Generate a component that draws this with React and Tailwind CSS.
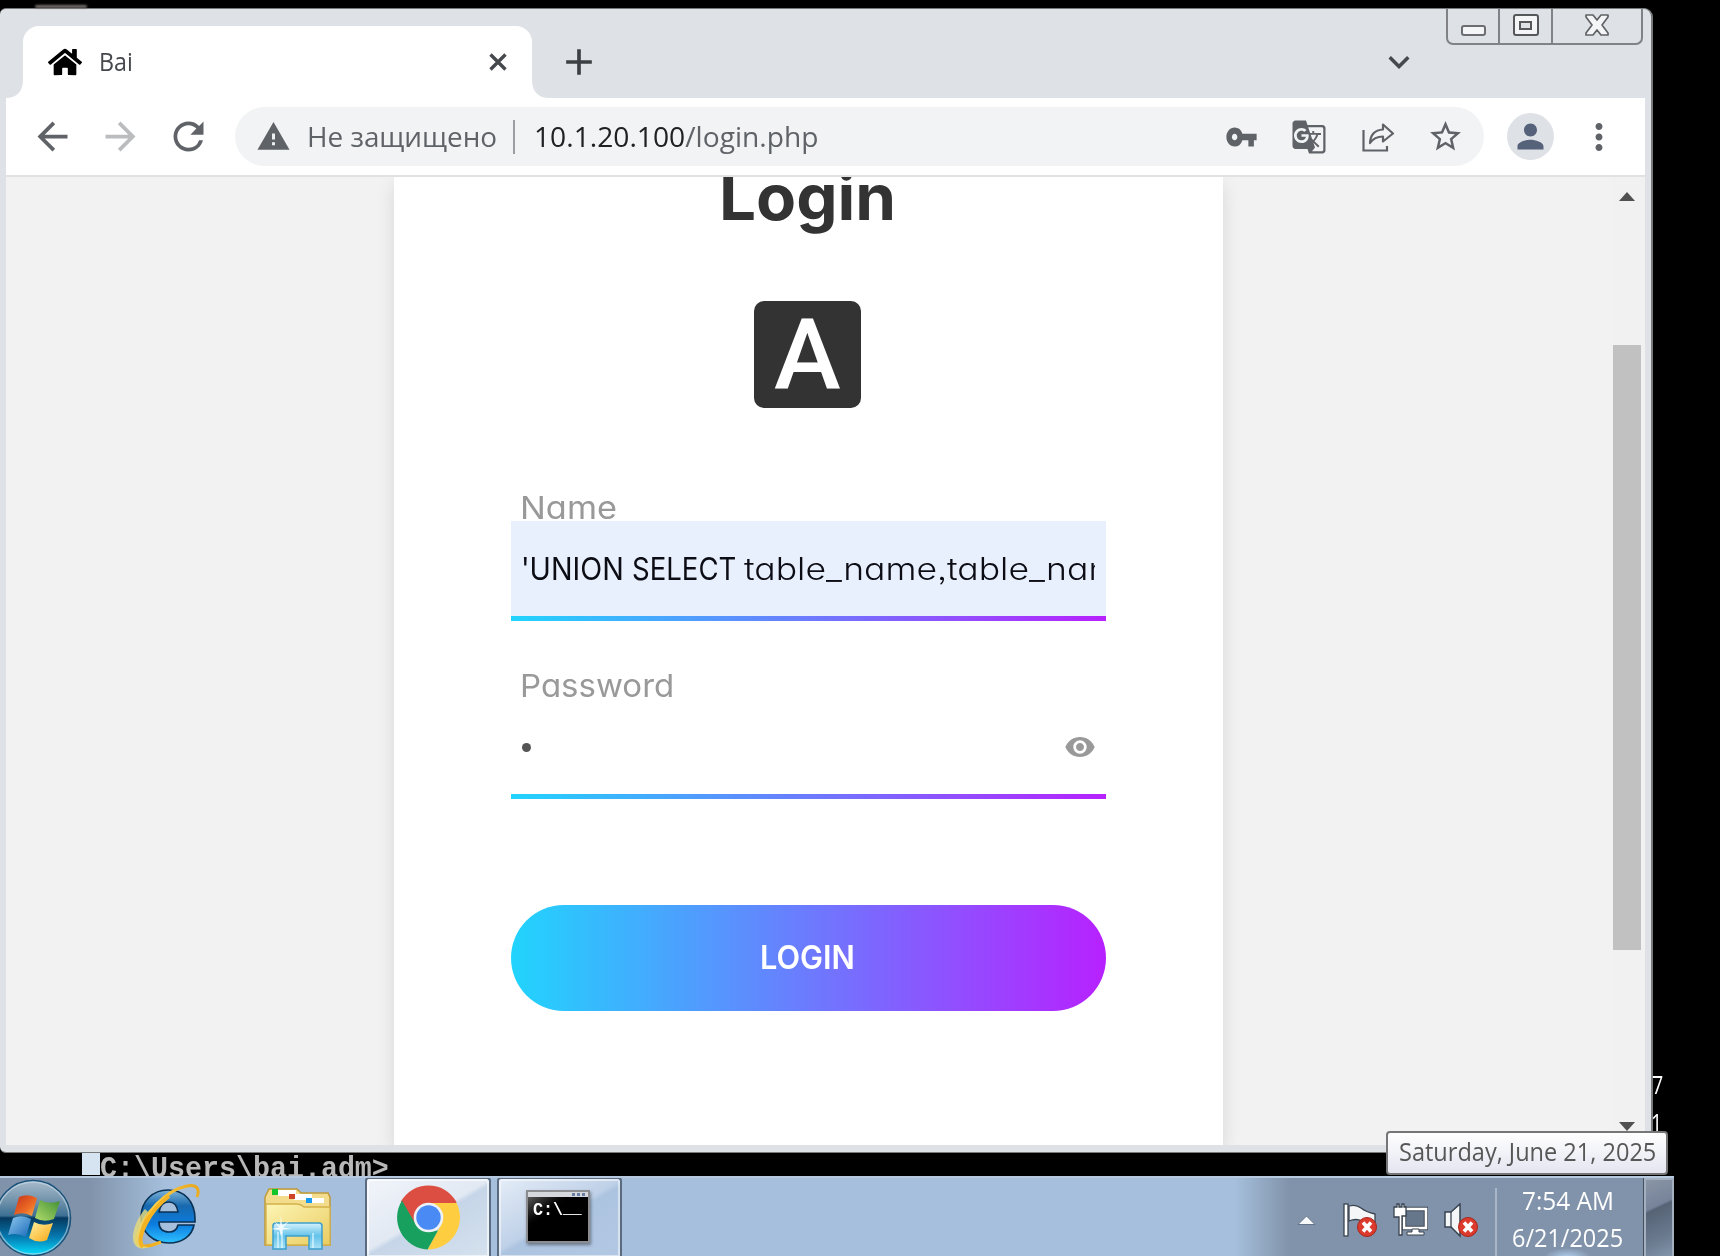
import React, { useLayoutEffect, useRef, useState } from "react";
import {
  MdArrowBack, MdArrowForward, MdRefresh, MdVpnKey, MdGTranslate, MdStarBorder, MdPerson,
  MdMoreVert, MdVisibility, MdAdd, MdKeyboardArrowDown, MdWarning,
} from "react-icons/md";
import { FaHome } from "react-icons/fa";

// Text set to an exact advance width, condensed or widened horizontally.
function Fit({ w, className = "", children }) {
  const ref = useRef(null);
  const [k, setK] = useState(1);
  useLayoutEffect(() => {
    setK(w / ref.current.offsetWidth);
  }, [w]);
  return (
    <span className={"block shrink-0 whitespace-nowrap " + className} style={{ width: w }}>
      <span ref={ref} className="inline-block origin-left whitespace-pre" style={{ transform: `scaleX(${k})` }}>
        {children}
      </span>
    </span>
  );
}

const SEGOE = "font-['Open_Sans',sans-serif]";
const GEO = "font-[Inter,sans-serif] [font-feature-settings:'cv11','ss03']";

function CaptionButtons() {
  return (
    <div className="flex h-[36px] w-[197px] rounded-b-[7px] border-2 border-t-0 border-[#808286]">
      <div className="flex w-[52px] items-end justify-center border-r-2 border-[#808286] pb-[7px]">
        <div className="h-[11px] w-[25px] rounded-[3px] border-2 border-[#6b6d70] bg-[#f4f5f6]" />
      </div>
      <div className="flex w-[53px] items-end justify-center border-r-2 border-[#808286] pb-[7px]">
        <div className="flex h-[22px] w-[26px] items-center justify-center rounded-[3px] border-2 border-[#55575a] bg-[#f4f5f6]">
          <div className="h-[9px] w-[13px] border-2 border-[#55575a] bg-[#dee1e6]" />
        </div>
      </div>
      <div className="flex flex-1 items-end justify-center pb-[6px]">
        <svg width="26" height="24" viewBox="0 0 26 24">
          <path d="M2 2h7l4 5 4-5h7v2l-6 8 6 8v2h-7l-4-5-4 5H2v-2l6-8-6-8z" fill="#f4f5f6" stroke="#606265" strokeWidth="1.7" strokeLinejoin="round" />
        </svg>
      </div>
    </div>
  );
}

function TabStrip() {
  return (
    <div className="flex h-[89px] items-end">
      <svg width="17" height="18" viewBox="0 0 17 18" className="shrink-0">
        <path d="M0 18C10 18 17 12 17 0V18z" fill="#fff" />
      </svg>
      <div className="flex h-[72px] w-[509px] shrink-0 items-center rounded-t-[16px] bg-white">
        <FaHome className="ml-[25px] h-[30px] w-[34px] text-black" preserveAspectRatio="none" />
        <Fit w={34} className={`ml-[17px] pb-[2px] text-[26px] leading-[40px] text-[#45484d] ${SEGOE}`}>Bai</Fit>
        <svg width="20" height="20" viewBox="0 0 20 20" className="ml-[355px] shrink-0">
          <path d="M2.500 2.500L17.500 17.500M17.500 2.500L2.500 17.500" stroke="#45484d" strokeWidth="3.400" />
        </svg>
      </div>
      <svg width="17" height="18" viewBox="0 0 17 18" className="shrink-0">
        <path d="M17 18C7 18 0 12 0 0V18z" fill="#fff" />
      </svg>
      <MdAdd className="mb-[14px] ml-[8px] h-[44px] w-[44px] text-[#3c4043]" />
      <MdKeyboardArrowDown className="mb-[15px] ml-[777px] h-[42px] w-[42px] text-[#45484d]" />
      <div className="ml-[26px] self-start">
        <CaptionButtons />
      </div>
    </div>
  );
}

function ShareIcon() {
  return (
    <svg width="34" height="32" viewBox="0 0 34 32" fill="none" stroke="#5f6368" strokeWidth="2.2" className="shrink-0">
      <path d="M2.5 9V29.5H26V25" />
      <path d="M9 22C9.500 13 14 9 22 8.500V3.500L32 12.500 22 20.500V15.500C16 15.500 12 17.500 9 22z" strokeLinejoin="round" />
    </svg>
  );
}

function Toolbar() {
  return (
    <div className="flex h-[77px] items-center bg-white text-[#5f6368]">
      <MdArrowBack className="ml-[24px] h-[45px] w-[45px] shrink-0" />
      <MdArrowForward className="ml-[23px] h-[45px] w-[45px] shrink-0 text-[#babcbe]" />
      <MdRefresh className="ml-[23px] h-[45px] w-[45px] shrink-0" />
      <div className="ml-[24px] flex h-[59px] w-[1249px] shrink-0 items-center rounded-full bg-[#f1f3f4]">
        <MdWarning className="ml-[21px] h-[35px] w-[35px] shrink-0" />
        <Fit w={190} className={`ml-[16px] pb-px text-[28px] leading-[40px] ${SEGOE}`}>Не защищено</Fit>
        <div className="ml-[16px] h-[34px] w-[2px] shrink-0 bg-[#9b9ea2]" />
        <Fit w={285} className={`ml-[19px] pb-px text-[28px] leading-[40px] ${SEGOE}`}>
          <span className="text-[#202124]">10.1.20.100</span>/login.php
        </Fit>
        <MdVpnKey className="ml-[406px] h-[38px] w-[33px] shrink-0" preserveAspectRatio="none" />
        <MdGTranslate className="ml-[33px] h-[36px] w-[36px] shrink-0" />
        <div className="ml-[34px] flex shrink-0"><ShareIcon /></div>
        <MdStarBorder className="ml-[32px] h-[37px] w-[37px] shrink-0" />
      </div>
      <div className="ml-[23px] flex h-[47px] w-[47px] shrink-0 items-center justify-center rounded-full bg-[#dee1e6]">
        <MdPerson className="h-[39px] w-[39px] text-[#56617a]" />
      </div>
      <MdMoreVert className="ml-[24px] h-[42px] w-[42px] shrink-0" />
    </div>
  );
}

function LoginCard() {
  return (
    <div className="ml-[388px] flex w-[829px] shrink-0 flex-col items-center bg-white shadow-[0_8px_18px_rgba(0,0,0,0.11)]">
      <Fit w={177} className={`-mt-[14px] mr-[3px] h-[69px] text-[64px] leading-[68px] font-bold text-[#333] ${GEO}`}>Login</Fit>
      <div className="mt-[69px] mr-[2px] flex h-[107px] w-[107px] items-center justify-center rounded-[10px] bg-[#333] text-white">
        <Fit w={67} className="h-[107px] font-[Roboto,sans-serif] text-[99px] leading-[107px] font-medium">A</Fit>
      </div>
      <div className="mt-[76px] w-[595px]">
        <Fit w={97} className={`ml-[9px] h-[37px] text-[31.500px] leading-[47px] text-[#999] ${GEO}`}>Name</Fit>
        <div className="h-[95px] overflow-hidden bg-[#e8f0fe] pt-[24px] pl-[10px]">
          <div className={`flex w-[574px] overflow-hidden text-[31px] leading-[48px] text-[#0c0c14] ${GEO}`}>
            <Fit w={111}>{"'UNION "}</Fit>
            <Fit w={112}>{"SELECT "}</Fit>
            <Fit w={203} className="font-light">table_name,</Fit>
            <Fit w={172} className="font-light">table_nam</Fit>
          </div>
        </div>
        <div className="h-[5px] bg-[linear-gradient(90deg,#21d4fd,#b721ff)]" />
        <Fit w={154} className={`mt-[45px] ml-[9px] h-[40px] text-[31.500px] leading-[40px] text-[#999] ${GEO}`}>Password</Fit>
        <div className="flex h-[88px] items-center pr-[10px] pl-[11px]">
          <div className="mt-[-5px] h-[9px] w-[9px] rounded-full bg-[#555]" />
          <MdVisibility className="mt-[-6px] ml-auto h-[32px] w-[32px] text-[#999]" />
        </div>
        <div className="h-[5px] bg-[linear-gradient(90deg,#21d4fd,#b721ff)]" />
        <button className="mt-[106px] flex h-[106px] w-full items-center justify-center rounded-full bg-[linear-gradient(90deg,#21d4fd,#b721ff)] text-white">
          <Fit w={95} className={`mr-[2px] text-[32px] leading-[40px] font-semibold ${GEO}`}>LOGIN</Fit>
        </button>
      </div>
    </div>
  );
}

function BrowserWindow() {
  return (
    <div className="h-[1145px] w-[1653px] shrink-0 overflow-hidden rounded-[9px] rounded-l-[6px] border-t border-r-2 border-b border-[#77797b] bg-[#dee1e6] pr-[6px] pl-[6px]">
      <TabStrip />
      <Toolbar />
      <div className="h-[2px] bg-[#e0e1e2]" />
      <div className="flex h-[968px] overflow-hidden bg-[#f2f2f2]">
        <LoginCard />
        <div className="ml-auto flex w-[33px] flex-col items-center bg-[#f1f1f1] pt-[15px] pr-[3px]">
          <svg width="16" height="9" viewBox="0 0 16 9" className="shrink-0"><path d="M8 0L16 9H0z" fill="#505050" /></svg>
          <div className="mt-[144px] h-[605px] w-[28px] shrink-0 bg-[#c1c1c1]" />
          <svg width="16" height="9" viewBox="0 0 16 9" className="mt-[172px] shrink-0"><path d="M8 9L16 0H0z" fill="#505050" /></svg>
        </div>
      </div>
    </div>
  );
}

function StartOrb() {
  return (
    <svg width="72" height="79" viewBox="0 0 72 79" className="shrink-0">
      <defs>
        <linearGradient id="orb" x1="0" y1="0" x2="0" y2="1">
          <stop offset="0" stopColor="#a9bccb" /><stop offset=".28" stopColor="#6f91ab" /><stop offset=".47" stopColor="#3c6f93" />
          <stop offset=".5" stopColor="#05395f" /><stop offset=".75" stopColor="#0679b0" /><stop offset="1" stopColor="#04e0ff" />
        </linearGradient>
        <linearGradient id="wr" x1="0" y1="0" x2="1" y2="1"><stop offset="0" stopColor="#c5321a" /><stop offset=".6" stopColor="#ec6a25" /><stop offset="1" stopColor="#f7b04c" /></linearGradient>
        <linearGradient id="wg" x1="1" y1="0" x2="0" y2="1"><stop offset="0" stopColor="#3f8f35" /><stop offset="1" stopColor="#b3dc6c" /></linearGradient>
        <linearGradient id="wb" x1="0" y1="0" x2="1" y2="1"><stop offset="0" stopColor="#8fc8ef" /><stop offset="1" stopColor="#1769b8" /></linearGradient>
        <linearGradient id="wy" x1="0" y1="0" x2="1" y2="1"><stop offset="0" stopColor="#fff0a0" /><stop offset="1" stopColor="#f6a712" /></linearGradient>
      </defs>
      <circle cx="33" cy="40" r="37.500" fill="url(#orb)" stroke="#1b5279" strokeWidth="1.600" />
      <circle cx="33" cy="40" r="36" fill="none" stroke="#c6dbe8" strokeOpacity=".6" strokeWidth="1.500" />
      <path d="M19 19Q28 15 37 20L32 38Q23 33 14 37z" fill="url(#wr)" />
      <path d="M40 22Q49 27 60 23L54 41Q44 45 35 40z" fill="url(#wg)" />
      <path d="M13 40Q22 36 31 41L26 59Q17 54 8 57z" fill="url(#wb)" />
      <path d="M34 44Q43 49 53 45L47 62Q38 66 29 60z" fill="url(#wy)" />
    </svg>
  );
}

function IeIcon() {
  return (
    <svg width="72" height="68" viewBox="0 0 72 68" className="shrink-0">
      <defs>
        <linearGradient id="ie" x1="0" y1="0" x2="0" y2="1">
          <stop offset="0" stopColor="#7fb4d8" /><stop offset=".3" stopColor="#1769ae" /><stop offset=".65" stopColor="#0b7de0" /><stop offset="1" stopColor="#2fc1ff" />
        </linearGradient>
        <linearGradient id="ring" x1="1" y1="0" x2="0" y2="1"><stop offset="0" stopColor="#e8a71c" /><stop offset=".5" stopColor="#ffd24a" /><stop offset="1" stopColor="#eda40e" /></linearGradient>
      </defs>
      <path fillRule="evenodd" d="M37 7C53 7 64 18 64 36V39H28C28 46 32 49 38 49 43 49 46 46 47 42H63C61 53 51 60 38 60 22 60 10 49 10 34 10 18 22 7 37 7zM28 29H47C46 22 43 19 38 19 32 19 29 23 28 29z" fill="url(#ie)" stroke="#0a3154" strokeWidth="1.600" />
      <path d="M66 14C69 6 66 1 56 3 35 7 12 31 6 54 4 62 10 67 30 59" fill="none" stroke="url(#ring)" strokeWidth="3" />
      <path d="M14 26C4 38-2 56 5 63 9 67 14 65 20 64 6 66 6 48 17 29z" fill="#e8dc7a" fillOpacity=".8" />
      <path d="M12 64C4 56 18 28 38 13" fill="none" stroke="#f6b321" strokeWidth="4" />
    </svg>
  );
}

function FolderIcon() {
  return (
    <svg width="70" height="64" viewBox="0 0 70 64" className="shrink-0">
      <defs>
        <linearGradient id="fo" x1="0" y1="0" x2="1" y2="1"><stop offset="0" stopColor="#fdf5b4" /><stop offset="1" stopColor="#e9cc62" /></linearGradient>
        <linearGradient id="st" x1="0" y1="0" x2="0" y2="1"><stop offset="0" stopColor="#d4f2fb" /><stop offset=".5" stopColor="#63c2ea" /><stop offset="1" stopColor="#a9e2f6" /></linearGradient>
      </defs>
      <path d="M2 10L6 2H34L38 6H65L67 10V58H2z" fill="#f3dc8c" stroke="#bf9a3c" strokeWidth="1.500" />
      <rect x="15" y="3" width="18" height="6" fill="#fff" /><rect x="9" y="2" width="6" height="6" fill="#14c62a" />
      <rect x="31" y="7" width="18" height="6" fill="#fff" /><rect x="26" y="7" width="6" height="5" fill="#cf4327" />
      <rect x="49" y="11" width="12" height="5" fill="#fff" /><rect x="43" y="11" width="6" height="5" fill="#159af0" />
      <path d="M3 17H34Q38 17 41 20H67V58H3z" fill="url(#fo)" stroke="#d3b14a" strokeWidth="1.300" />
      <path d="M10 62V39Q10 36 13 36H56Q59 36 59 39V62H46V49H23V62z" fill="url(#st)" stroke="#3c9fcb" strokeWidth="1.500" />
      <path d="M15 45V61M19 45V61M50 46V61" stroke="#e6faff" strokeWidth="1.200" />
      <path d="M18 28L19 39 27 33 20 40.500 29 42 20 42.500 18 50 16.500 43 8 42 16 40.500 11 34 17 39z" fill="#fff" fillOpacity=".85" />
    </svg>
  );
}

function ChromeIcon() {
  return (
    <svg width="65" height="65" viewBox="-32.5 -32.5 65 65">
      <path d="M-27.700 -16A32 32 0 0 1 27.700 -16L28 -14.500H0L-12.600 7.200z" fill="#dc4e41" />
      <path d="M28 -14.500A32 32 0 0 1 -1 32L12.500 7.200 0 -14.500z" fill="#ffcd40" />
      <path d="M-1 32A32 32 0 0 1 -26.500 -17L-12.600 7.200 0 14.500 9.500 13z" fill="#17a05e" />
      <circle r="14.800" fill="#eef2f7" />
      <circle r="12.200" fill="#4a8af4" />
    </svg>
  );
}

function CmdIcon() {
  return (
    <div className="h-[53px] w-[64px] border-2 border-[#8b8d90] bg-black shadow-[1px_2px_3px_rgba(0,0,0,0.4)]">
      <div className="flex h-[5px] items-center justify-end gap-[2px] bg-[#d5d9dd] pr-[3px]">
        <span className="h-[3px] w-[3px] bg-[#6a7fa6]" />
        <span className="h-[3px] w-[3px] bg-[#6a7fa6]" />
        <span className="h-[3px] w-[3px] bg-[#6a7fa6]" />
      </div>
      <div className="flex h-[44px] bg-linear-to-br from-[#5a5a5a] via-black via-40% to-black pt-[3px] pl-[5px] font-['Liberation_Mono',monospace] text-[19px] leading-[20px] text-white">
        <Fit w={30} className="h-[20px] font-bold">C:\</Fit>
        <Fit w={18} className="h-[20px] -mt-[2px] font-bold">_</Fit>
      </div>
    </div>
  );
}

function ErrorBadge({ x }) {
  return (
    <g transform={`translate(${x} 24)`}>
      <circle r="9.500" fill="#dc3a2c" stroke="#a8261c" strokeWidth="1" />
      <path d="M-4-4.500L4 4.500M4-4.500L-4 4.500" stroke="#fff" strokeWidth="3.600" />
    </g>
  );
}

function Tray() {
  return (
    <>
      <svg width="19" height="12" viewBox="0 0 19 12" className="mt-[8px] shrink-0">
        <path d="M9.500 1L18 9.500H1z" fill="#f7f9fb" stroke="#66748a" strokeWidth="1" />
      </svg>
      <svg width="36" height="36" viewBox="0 0 36 36" className="mt-[7px] ml-[26px] shrink-0">
        <rect x="2" y="1" width="4" height="32" fill="#fff" stroke="#39434f" strokeWidth="1.300" />
        <path d="M7 3Q14 1 19 5T33 11V19Q26 21 20 18T7 18z" fill="#f5f6f8" stroke="#39434f" strokeWidth="1.300" />
        <ErrorBadge x={25} />
      </svg>
      <svg width="36" height="36" viewBox="0 0 36 36" className="mt-[7px] ml-[14px] shrink-0">
        <rect x="12" y="6" width="22" height="19" fill="#67778b" stroke="#39434f" strokeWidth="4.500" />
        <rect x="12" y="6" width="22" height="19" fill="none" stroke="#fff" strokeWidth="2.600" />
        <path d="M20 26H27V29H32V32H15V29H20z" fill="#fff" stroke="#39434f" strokeWidth="1" />
        <path d="M2 4H5V1H7V4H10V1H12V4H14V13H10V32H7V14H2z" fill="#fff" stroke="#39434f" strokeWidth="1.300" />
      </svg>
      <svg width="36" height="36" viewBox="0 0 36 36" className="mt-[7px] ml-[16px] shrink-0">
        <path d="M1 9H7L16 1V33L7 24H1z" fill="#f5f6f8" stroke="#39434f" strokeWidth="1.500" />
        <path d="M7 9V24" stroke="#39434f" strokeWidth="1.300" />
        <ErrorBadge x={24} />
      </svg>
    </>
  );
}

function Taskbar() {
  return (
    <div className="flex h-[80px] w-[1674px] shrink-0 items-center overflow-hidden border-t-2 border-[#b6c9df] bg-[linear-gradient(90deg,#8193aa_0px,#8193aa_90px,#a5bfdc_165px,#a5bfdc_1235px,#8193aa_1290px)]">
      <StartOrb />
      <div className="ml-[59px] flex shrink-0"><IeIcon /></div>
      <div className="mt-[4px] ml-[60px] flex shrink-0"><FolderIcon /></div>
      <div className="ml-[32px] flex h-[80px] w-[126px] shrink-0 items-center justify-center rounded-t-[4px] border-2 border-b-0 border-[#5a6b80] bg-[linear-gradient(150deg,#f1f4fa_0%,#e2e9f3_48%,#c6d6e8_52%,#d5e1ee_100%)] pb-px shadow-[inset_0_0_0_2px_#ffffff99]">
        <ChromeIcon />
      </div>
      <div className="ml-[6px] flex h-[80px] w-[125px] shrink-0 items-center justify-center rounded-t-[4px] border-2 border-b-0 border-[#5a6b80] bg-[linear-gradient(150deg,#e4ecf7_0%,#bfd1e8_48%,#adc4e0_52%,#b2c7e2_100%)] pr-[3px] pb-[3px] shadow-[inset_0_0_0_2px_#ffffff80]">
        <CmdIcon />
      </div>
      <div className="ml-[675px] flex shrink-0 items-center"><Tray /></div>
      <div className="ml-[15px] h-[68px] w-[2px] shrink-0 self-end bg-[#a9b7c8]" />
      <div className="flex w-[141px] shrink-0 flex-col items-center self-start bg-[radial-gradient(ellipse_24px_10px_at_50%_80px,#b5d3f2,transparent)] pt-[4px] text-[26px] text-white">
        <Fit w={92} className={`h-[37px] leading-[37px] ${SEGOE}`}>7:54 AM</Fit>
        <Fit w={111} className={`h-[38px] leading-[37px] ${SEGOE}`}>6/21/2025</Fit>
      </div>
      <div className="ml-auto h-full w-[30px] shrink-0 border-2 border-b-0 border-[#a4b0bf] bg-[linear-gradient(155deg,#8a96a5_0%,#76839a_35%,#566375_38%,#6b7b90_75%,#8295ac_100%)] shadow-[-1px_0_0_#45505f]" />
    </div>
  );
}

export default function App() {
  return (
    <div className="relative flex h-[1256px] w-[1720px] flex-col overflow-hidden bg-black pt-[8px]">
      <div className="absolute top-[5px] left-[35px] h-[3px] w-[52px] rounded-full bg-[#77716e] blur-[1px]" />
      <BrowserWindow />
      <div className="flex h-[23px] overflow-hidden bg-black pl-[82px]">
        <div className="h-[22px] w-[18px] shrink-0 bg-[#d6e4f2]" />
        <Fit w={289} className="text-[29px] leading-[34px] font-bold font-['Liberation_Mono',monospace] text-[#b8b8b8]">{"C:\\Users\\bai.adm>"}</Fit>
      </div>
      <Taskbar />
      <div className={`absolute top-[1065px] left-[1652px] flex w-[12px] flex-col text-[25px] leading-[38px] text-white ${SEGOE}`}>
        <Fit w={11}>7</Fit>
        <Fit w={11} className="-ml-px">1</Fit>
      </div>
      <div className={`absolute top-[1131px] left-[1386px] flex h-[44px] w-[282px] items-center rounded-[4px] border-2 border-[#767676] bg-linear-to-b from-white to-[#e4e5f0] pl-[11px] text-[26px] leading-[36px] text-[#575757] ${SEGOE}`}>
        <Fit w={257} className="mb-[5px]">Saturday, June 21, 2025</Fit>
      </div>
    </div>
  );
}
